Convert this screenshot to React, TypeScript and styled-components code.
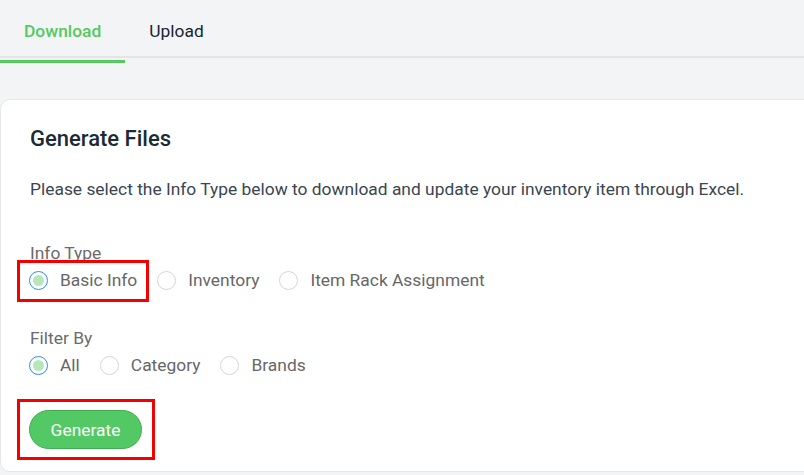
import React, { useState } from "react";
import styled, { createGlobalStyle, css } from "styled-components";

const Global = createGlobalStyle`
  html, body { margin: 0; padding: 0; background: #f3f4f6; }
  body { font-family: Roboto, "Liberation Sans", Arial, sans-serif; overflow: hidden; }
  * { box-sizing: border-box; }
`;

const Page = styled.div`
  width: 804px;
  height: 475px;
  background: #f3f4f6;
  display: flex;
  flex-direction: column;
  overflow: hidden;
`;

const TabBar = styled.div`
  display: flex;
  height: 58px;
  border-bottom: 2px solid #e4e5e7;
`;

const Tab = styled.button<{ $active?: boolean }>`
  all: unset;
  cursor: pointer;
  padding: 2px 24px 0 24px;
  height: 58px;
  display: flex;
  align-items: center;
  margin-bottom: -2px;
  font-size: 17.4px;
  font-weight: ${(p) => (p.$active ? 500 : 400)};
  color: ${(p) => (p.$active ? "#55c95f" : "#1a2433")};
  border-bottom: 3px solid ${(p) => (p.$active ? "#55c95f" : "transparent")};
`;

const Card = styled.div`
  margin-top: 41px;
  width: 820px;
  height: 373px;
  background: #fff;
  border: 1px solid #e6e7e9;
  border-radius: 10px;
  padding: 25px 30px 0 28px;
  display: flex;
  flex-direction: column;
  align-items: flex-start;
`;

const Title = styled.h2`
  margin: 0 0 0 1px;
  font-size: 22px;
  line-height: 28px;
  font-weight: 500;
  color: #1b2a35;
`;

const Description = styled.p`
  margin: 24px 0 0 1px;
  font-size: 17.4px;
  line-height: 24px;
  color: #3a4651;
`;

const Label = styled.div<{ $first?: boolean }>`
  margin-top: ${(p) => (p.$first ? "41px" : "36px")};
  margin-left: 1px;
  font-size: 17.4px;
  line-height: 22px;
  color: #6b6b6b;
`;

const RadioRow = styled.div`
  display: flex;
  align-items: center;
  gap: 20px;
  margin-top: 5px;
`;

const highlight = css`
  &::after {
    content: "";
    position: absolute;
    border: 3px solid #f40000;
    pointer-events: none;
  }
`;

const Option = styled.label<{ $marked?: boolean }>`
  position: relative;
  display: flex;
  align-items: center;
  gap: 12px;
  height: 22px;
  cursor: pointer;
  font-size: 17.4px;
  color: #676767;
  ${(p) =>
    p.$marked &&
    css`
      ${highlight}
      &::after {
        inset: -9px -12px -11px -12px;
      }
    `}
`;

const Circle = styled.span<{ $checked?: boolean }>`
  width: 19px;
  height: 19px;
  border-radius: 50%;
  border: 1px solid ${(p) => (p.$checked ? "#2f8de4" : "#d6d6d6")};
  display: flex;
  align-items: center;
  justify-content: center;
  background: #fff;
  &::before {
    content: "";
    width: 11px;
    height: 11px;
    border-radius: 50%;
    background: ${(p) => (p.$checked ? "#b8e6bc" : "transparent")};
  }
`;

const ButtonWrap = styled.div`
  position: relative;
  margin-top: 34px;
  ${highlight}
  &::after {
    inset: -11px -13px -11px -12px;
  }
`;

const GenerateButton = styled.button`
  width: 113px;
  height: 39px;
  border-radius: 20px;
  border: 1px solid #3fae4c;
  background: #52c964;
  color: #fff;
  font-family: Roboto, "Liberation Sans", Arial, sans-serif;
  font-size: 17.4px;
  font-weight: 400;
  cursor: pointer;
`;

type Opt = { key: string; label: string; marked?: boolean };

function RadioGroup({ options, value, onChange }: { options: Opt[]; value: string; onChange: (v: string) => void }) {
  return (
    <RadioRow>
      {options.map((o) => (
        <Option key={o.key} $marked={o.marked} onClick={() => onChange(o.key)}>
          <Circle $checked={value === o.key} />
          {o.label}
        </Option>
      ))}
    </RadioRow>
  );
}

export default function App() {
  const [tab, setTab] = useState("download");
  const [info, setInfo] = useState("basic");
  const [filter, setFilter] = useState("all");
  return (
    <Page>
      <Global />
      <TabBar>
        <Tab $active={tab === "download"} onClick={() => setTab("download")}>Download</Tab>
        <Tab $active={tab === "upload"} onClick={() => setTab("upload")}>Upload</Tab>
      </TabBar>
      <Card>
        <Title>Generate Files</Title>
        <Description>
          Please select the Info Type below to download and update your inventory item through Excel.
        </Description>
        <Label $first>Info Type</Label>
        <RadioGroup
          value={info}
          onChange={setInfo}
          options={[
            { key: "basic", label: "Basic Info", marked: true },
            { key: "inventory", label: "Inventory" },
            { key: "rack", label: "Item Rack Assignment" },
          ]}
        />
        <Label>Filter By</Label>
        <RadioGroup
          value={filter}
          onChange={setFilter}
          options={[
            { key: "all", label: "All" },
            { key: "category", label: "Category" },
            { key: "brands", label: "Brands" },
          ]}
        />
        <ButtonWrap>
          <GenerateButton>Generate</GenerateButton>
        </ButtonWrap>
      </Card>
    </Page>
  );
}
